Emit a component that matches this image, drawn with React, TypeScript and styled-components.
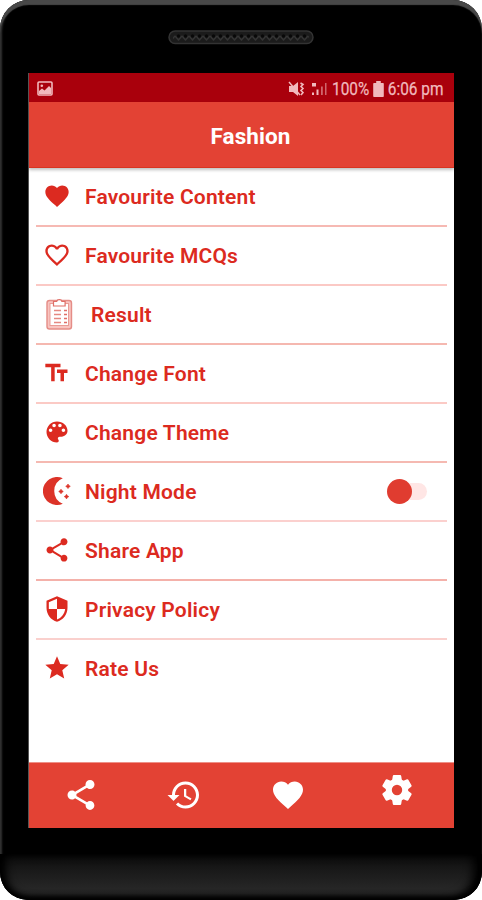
import React from "react";
import styled, { createGlobalStyle } from "styled-components";

const RED = "#e34234";
const INK = "#dc2a20";

const GlobalStyle = createGlobalStyle`
  *, *::before, *::after { box-sizing: border-box; }
  body { margin: 0; background: #fff; font-family: Roboto, "Liberation Sans", sans-serif; }
`;

const Phone = styled.div`
  width: 482px;
  height: 900px;
  background: #000;
  border-radius: 29px 29px 28px 28px;
  overflow: hidden;
  display: flex;
  flex-direction: column;
  align-items: center;
  box-shadow: inset 0 5px 1px #484848, inset 2px 2px 2px #303030;
`;

const Earpiece = styled.header`
  height: 73px;
  flex: none;
  display: flex;
  align-items: flex-start;
  padding-top: 30px;
`;

const Chin = styled.footer`
  margin-top: 26px;
  width: 100%;
  flex: 1;
  border-radius: 0 0 28px 28px;
  background: linear-gradient(#0c0c0c, #191919 35%, #262626 75%, #242424);
  box-shadow: inset 0 -3px 4px #000, inset 6px 0 9px #000, inset -9px 0 10px #000;
`;

const Screen = styled.main`
  width: 426px;
  height: 755px;
  flex: none;
  border-left: 1px solid #555;
  background: #fff;
  display: flex;
  flex-direction: column;
`;

const StatusBar = styled.div`
  height: 29px;
  flex: none;
  background: #a9000c;
  color: #f1b9bd;
  display: flex;
  align-items: center;
  justify-content: space-between;
  padding: 2px 10px 0 8px;
  font-size: 17.5px;
`;

const StatusGroup = styled.div`
  display: flex;
  align-items: center;
`;

const StatusText = styled.span<{ $width: number }>`
  width: ${(p) => p.$width}px;
  white-space: nowrap;
  display: block;
  transform: scaleX(0.88);
  transform-origin: left center;
  -webkit-text-stroke: 0.25px currentColor;
`;

const AppBar = styled.div`
  height: 66px;
  flex: none;
  background: ${RED};
  border-bottom: 1px solid #d93420;
  box-shadow: 0 2px 3px rgba(0, 0, 0, 0.25);
  display: flex;
  align-items: center;
  justify-content: center;
  padding: 3px 0 0 18px;
  color: #fff;
`;

const Title = styled.h1`
  margin: 0;
  font-size: 22.5px;
  font-weight: 700;
  letter-spacing: 0.1px;
`;

const List = styled.ul`
  list-style: none;
  margin: 0;
  padding: 0 7px;
  flex: 1;
`;

const Row = styled.li<{ $tone?: string }>`
  height: 59px;
  display: flex;
  align-items: center;
  padding-bottom: 1px;
  border-bottom: 2px solid ${(p) => p.$tone ?? "transparent"};
  color: ${INK};
`;

const IconSlot = styled.span<{ $wide?: boolean }>`
  width: ${(p) => (p.$wide ? 55 : 49)}px;
  padding-left: 7px;
  display: flex;
  align-items: center;
`;

const Label = styled.span`
  flex: 1;
  font-size: 21px;
  font-weight: 600;
  letter-spacing: 0.2px;
  line-height: 24px;
  padding-top: 2px;
`;

const Toggle = styled.span`
  width: 40px;
  height: 25px;
  margin-right: 20px;
  display: grid;
  align-items: center;
`;

const Track = styled.span`
  grid-area: 1 / 1;
  height: 17px;
  margin-left: 5px;
  border-radius: 9px;
  background: #ffe6e5;
`;

const Knob = styled.span`
  grid-area: 1 / 1;
  width: 25px;
  height: 25px;
  border-radius: 50%;
  background: #e03c30;
`;

const NavBar = styled.nav`
  height: 66px;
  flex: none;
  background: ${RED};
  border-top: 1px solid #ee9087;
  color: #fff;
  display: grid;
  grid-template-columns: 103.5px 103.5px 103.5px 1fr;
`;

const NavItem = styled.span<{ $raised?: boolean }>`
  display: flex;
  align-items: center;
  justify-content: center;
  padding-bottom: ${(p) => (p.$raised ? 11 : 1)}px;
`;

const paths = {
  heart:
    "M12 21.35l-1.45-1.32C5.4 15.36 2 12.28 2 8.5 2 5.42 4.42 3 7.5 3c1.74 0 3.41.81 4.5 2.09C13.09 3.81 14.76 3 16.5 3 19.58 3 22 5.42 22 8.5c0 3.78-3.4 6.86-8.55 11.54L12 21.35z",
  heartOutline:
    "M16.5 3c-1.74 0-3.41.81-4.5 2.09C10.91 3.81 9.24 3 7.5 3 4.42 3 2 5.42 2 8.5c0 3.78 3.4 6.86 8.55 11.54L12 21.35l1.45-1.32C18.6 15.36 22 12.28 22 8.5 22 5.42 19.58 3 16.5 3zm-4.4 15.55l-.1.1-.1-.1C7.14 14.24 4 11.39 4 8.5 4 6.5 5.5 5 7.5 5c1.54 0 3.04.99 3.57 2.36h1.87C13.46 5.99 14.96 5 16.5 5c2 0 3.5 1.5 3.5 3.5 0 2.89-3.14 5.74-7.9 10.05z",
  font: "M2 4v3h5v12h3V7h5V4H2zm19 5h-9v3h3v7h3v-7h3V9z",
  palette:
    "M12 3c-4.97 0-9 4.03-9 9s4.03 9 9 9c.83 0 1.5-.67 1.5-1.5 0-.39-.15-.74-.39-1.01-.23-.26-.38-.61-.38-.99 0-.83.67-1.5 1.5-1.5H16c2.76 0 5-2.24 5-5 0-4.42-4.03-8-9-8zm-5.5 9c-.83 0-1.5-.67-1.5-1.5S5.67 9 6.5 9 8 9.67 8 10.5 7.33 12 6.5 12zm3-4C8.67 8 8 7.33 8 6.5S8.67 5 9.5 5s1.5.67 1.5 1.5S10.33 8 9.5 8zm5 0c-.83 0-1.5-.67-1.5-1.5S13.67 5 14.5 5s1.5.67 1.5 1.5S15.33 8 14.5 8zm3 4c-.83 0-1.5-.67-1.5-1.5S16.67 9 17.5 9s1.5.67 1.5 1.5-.67 1.5-1.5 1.5z",
  share:
    "M18 16.08c-.76 0-1.44.3-1.96.77L8.91 12.7c.05-.23.09-.46.09-.7s-.04-.47-.09-.7l7.05-4.11c.54.5 1.25.81 2.04.81 1.66 0 3-1.34 3-3s-1.34-3-3-3-3 1.34-3 3c0 .24.04.47.09.7L8.04 9.81C7.5 9.31 6.79 9 6 9c-1.66 0-3 1.34-3 3s1.34 3 3 3c.79 0 1.5-.31 2.04-.81l7.12 4.16c-.05.21-.08.43-.08.65 0 1.61 1.31 2.92 2.92 2.92 1.61 0 2.92-1.31 2.92-2.92s-1.31-2.92-2.92-2.92z",
  shield:
    "M12 1L3 5v6c0 5.55 3.84 10.74 9 12 5.16-1.26 9-6.45 9-12V5l-9-4zm0 10.99h7c-.53 4.12-3.28 7.79-7 8.94V12H5V6.3l7-3.11v8.8z",
  star: "M12 17.27L18.18 21l-1.64-7.03L22 9.24l-7.19-.61L12 2 9.19 8.63 2 9.24l5.46 4.73L5.82 21z",
  history:
    "M13 3c-4.97 0-9 4.03-9 9H1l3.89 3.89.07.14L9 12H6c0-3.87 3.13-7 7-7s7 3.13 7 7-3.13 7-7 7c-1.93 0-3.68-.79-4.94-2.06l-1.42 1.42C8.27 19.99 10.51 21 13 21c4.97 0 9-4.03 9-9s-4.03-9-9-9zm-1 5v5l4.28 2.54.72-1.21-3.5-2.08V8H12z",
};

const Glyph = ({ name, size = 28 }: { name: keyof typeof paths; size?: number }) => (
  <svg width={size} height={size} viewBox="0 0 24 24" fill="currentColor" aria-hidden>
    <path d={paths[name]} />
  </svg>
);

const GearIcon = () => (
  <svg width="36" height="36" viewBox="-18 -18 36 36" fill="currentColor" aria-hidden>
    <circle r="8.200" fill="none" stroke="currentColor" strokeWidth="6" />
    {[0, 60, 120, 180, 240, 300].map((angle) => (
      <path key={angle} d="M-5 -9L-4.200 -14Q-4 -14.900 -3.200 -14.900H3.200Q4 -14.900 4.200 -14L5 -9z" transform={`rotate(${angle})`} />
    ))}
  </svg>
);

const ClipboardIcon = () => (
  <svg width="34" height="34" viewBox="0 0 34 34" fill="none" aria-hidden>
    <rect x="4" y="3.5" width="24.5" height="28.500" rx="2.5" fill="#f8c4c0" stroke="#e58d87" strokeWidth="1.4" />
    <rect x="7" y="6.5" width="18.5" height="22" fill="#fff" stroke="#e99b95" />
    <path d="M10.5 4.5h3.2c.4-2.500 4.8-2.500 5.2 0h3.2v4.500H10.5z" fill="#fff" stroke="#df6e67" strokeWidth="1.2" />
    <path d="M11 13.5h7M11 17.5h7M11 21.5h7M11 25.5h7" stroke="#e58982" strokeWidth="1.4" />
    <path d="M21 13.5h3M21 17.5h3M21 21.5h3M21 25.5h3" stroke="#df6e67" strokeWidth="1.6" />
  </svg>
);

const MoonIcon = () => (
  <svg width="28" height="28" viewBox="0 0 28 28" fill="#dc3328" aria-hidden>
    <path d="M19.8 1.3A14 14 0 1 0 19.8 26.7A13.7 13.7 0 0 1 19.8 1.3Z" />
    <path
      d="M25 7l.9 1.4 1.4.9-1.4.9-.9 1.4-.9-1.4-1.4-.9 1.4-.9zM18 12.2l.9 1.4 1.4.9-1.4.9-.9 1.4-.9-1.4-1.4-.9 1.4-.9zM23.500 17.300l.9 1.4 1.4.9-1.4.9-.9 1.4-.9-1.4-1.4-.9 1.4-.9z"
      stroke="#dc3328"
      strokeWidth=".6"
    />
  </svg>
);

const PictureIcon = () => (
  <svg width="16" height="15" viewBox="0 0 16 15" aria-hidden>
    <rect x="1" y="1" width="14" height="13" rx="1" fill="none" stroke="currentColor" strokeWidth="1.6" />
    <circle cx="4.8" cy="4.8" r="1.3" fill="currentColor" />
    <path d="M2 12V10l3-2.5 2.5 2L12 5l2 2v6H2z" fill="currentColor" />
  </svg>
);

const StatusIcons = () => (
  <svg width="44" height="18" viewBox="0 0 44 18" fill="currentColor" aria-hidden>
    <path d="M1 6h4l5-4v14l-5-4H1z" />
    <path d="M1 2l11 13" stroke="currentColor" strokeWidth="1.4" />
    <path d="M12.5 3l2.5 1.5-2 2 2 2-2 2 2 2-2 2.5" fill="none" stroke="currentColor" strokeWidth="1.6" />
    <path d="M24 3h4v3.5h-4zM24 12.5h2V15h-2zM28.5 9.5h2V15h-2z" />
    <path d="M33 6.5h1.8V15H33zM37 3h1.5v12H37z" opacity=".55" />
  </svg>
);

const BatteryIcon = () => (
  <svg width="11" height="16" viewBox="0 0 11 16" fill="currentColor" aria-hidden>
    <path d="M3.2 0h4.6v2H10q.8 0 .8.8v12.4q0 .8-.8.8H1q-.8 0-.8-.8V2.8Q.2 2 1 2h2.2z" />
  </svg>
);

const SpeakerGrille = () => (
  <svg width="146" height="15" viewBox="0 0 146 15" aria-hidden>
    <defs>
      <pattern id="mesh" width="7" height="8" patternUnits="userSpaceOnUse" y="4">
        <path d="M0 2l3.5 4L7 2" fill="none" stroke="#343434" strokeWidth="1.4" />
        <circle cx="3.5" cy="2" r="1.7" fill="#080808" />
      </pattern>
    </defs>
    <rect x="1" y="1" width="144" height="12.5" rx="6.2" fill="#1b1b1b" stroke="#333" strokeWidth="1.5" />
    <rect x="5" y="4" width="136" height="8" rx="4" fill="url(#mesh)" />
  </svg>
);

type Item = { label: string; icon: React.ReactNode; tone?: string; wide?: boolean; toggle?: boolean };

const items: Item[] = [
  { label: "Favourite Content", icon: <Glyph name="heart" />, tone: "#f6b9b3" },
  { label: "Favourite MCQs", icon: <Glyph name="heartOutline" />, tone: "#fbc9c5" },
  { label: "Result", icon: <ClipboardIcon />, tone: "#f5b8b0", wide: true },
  { label: "Change Font", icon: <Glyph name="font" />, tone: "#fbcac5" },
  { label: "Change Theme", icon: <Glyph name="palette" />, tone: "#f5b9b1" },
  { label: "Night Mode", icon: <MoonIcon />, tone: "#fbd0ce", toggle: true },
  { label: "Share App", icon: <Glyph name="share" />, tone: "#f4b1aa" },
  { label: "Privacy Policy", icon: <Glyph name="shield" />, tone: "#fad0cd" },
  { label: "Rate Us", icon: <Glyph name="star" /> },
];

export default function App() {
  return (
    <>
      <GlobalStyle />
      <Phone>
        <Earpiece>
          <SpeakerGrille />
        </Earpiece>
        <Screen>
          <StatusBar>
            <PictureIcon />
            <StatusGroup>
              <StatusIcons />
              <StatusText $width={41}>100%</StatusText>
              <BatteryIcon />
              <StatusText $width={60}>&nbsp;6:06 pm</StatusText>
            </StatusGroup>
          </StatusBar>
          <AppBar>
            <Title>Fashion</Title>
          </AppBar>
          <List>
            {items.map((item) => (
              <Row key={item.label} $tone={item.tone}>
                <IconSlot $wide={item.wide}>{item.icon}</IconSlot>
                <Label>{item.label}</Label>
                {item.toggle && (
                  <Toggle>
                    <Track />
                    <Knob />
                  </Toggle>
                )}
              </Row>
            ))}
          </List>
          <NavBar>
            <NavItem><Glyph name="share" size={36} /></NavItem>
            <NavItem><Glyph name="history" size={36} /></NavItem>
            <NavItem><Glyph name="heart" size={36} /></NavItem>
            <NavItem $raised><GearIcon /></NavItem>
          </NavBar>
        </Screen>
        <Chin />
      </Phone>
    </>
  );
}
